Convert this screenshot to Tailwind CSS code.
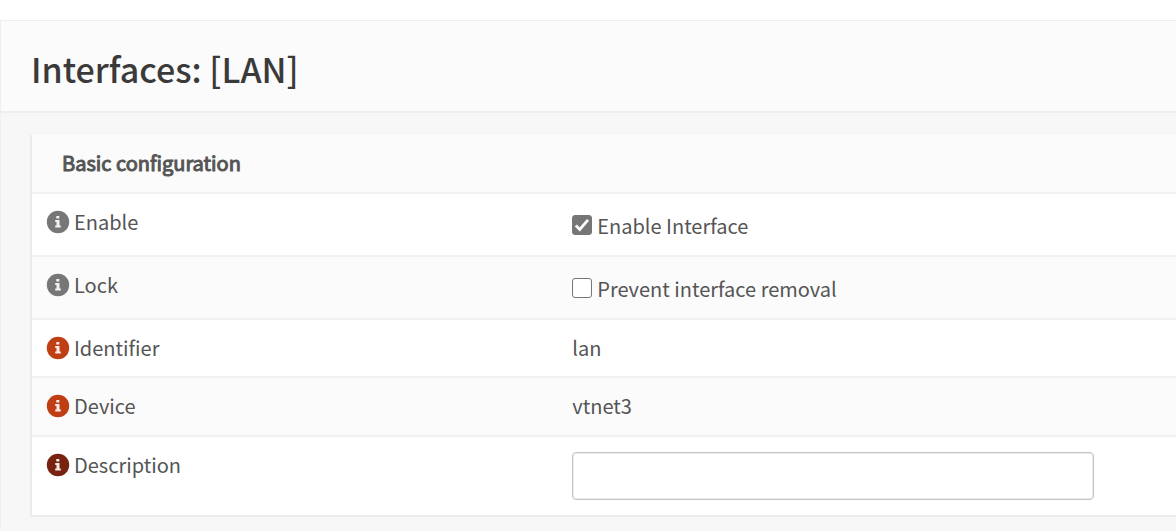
<!DOCTYPE html>
<html lang="en">
<head>
<meta charset="utf-8">
<meta name="viewport" content="width=device-width, initial-scale=1">
<title>Interfaces: [LAN]</title>
<script src="https://cdn.jsdelivr.net/npm/@tailwindcss/browser@4"></script>
</head>
<body class="min-h-screen bg-[#f7f7f7] font-['Noto_Sans_CJK_SC',sans-serif] text-[20px] leading-7 text-[#555]">
<svg class="hidden" aria-hidden="true">
  <symbol id="info" viewBox="0 0 24 24">
    <circle cx="12" cy="12" r="11.2" fill="currentColor"/>
    <path fill="#fff" fill-opacity=".9" d="M10.3 6h3v2.4h-3zM9.2 9.9h4.3v5.5h1.3v2H9.2v-2h1.3v-3.5H9.2z"/>
  </symbol>
  <symbol id="check" viewBox="0 0 20 20">
    <path d="M3.8 10.6l4 3.9L16 4.8" fill="none" stroke="#fff" stroke-width="2.8"/>
  </symbol>
</svg>
<div class="h-5 bg-white"></div>
<header class="border-t border-b-2 border-l border-[#eee] bg-[#fbfbfb] pt-[25px] pb-[19px] pl-[30px]">
  <h1 class="text-[34px] leading-[46px] font-medium text-[#3a3a3a]">Interfaces: [LAN]</h1>
</header>
<main class="border-l border-[#f0f0f0] pt-[22px] pb-3 pl-[29px]">
  <table class="w-full table-fixed border-separate border-spacing-0 border-b-2 border-l-2 border-[#ebebeb] bg-white text-left">
    <colgroup><col class="w-[46%]"><col></colgroup>
    <thead>
      <tr class="bg-[#fbfbfb]">
        <th colspan="2" scope="colgroup" class="border-b-2 border-[#f1f1f1] pt-[14px] pb-[15px] pl-[30px] font-normal [-webkit-text-stroke:1px_#555]">Basic configuration</th>
      </tr>
    </thead>
    <tbody class="align-top">
      <tr>
        <th scope="row" class="border-b-2 border-[#f1f1f1] pt-[14px] pl-[14px] font-normal"><a href="#enable" class="flex items-center gap-1"><svg class="size-6 text-[#777]" aria-hidden="true"><use href="#info"/></svg>Enable</a></th>
        <td class="border-b-2 border-[#f1f1f1] pt-[18px] pb-[15px] pl-[14px]"><label class="flex items-start gap-[5px]"><span class="mt-[3px] grid"><input id="enable" type="checkbox" checked class="peer col-start-1 row-start-1 size-5 appearance-none rounded-[3px] border border-[#767676] bg-white checked:bg-[#767676]"><svg class="pointer-events-none invisible col-start-1 row-start-1 size-5 peer-checked:visible" aria-hidden="true"><use href="#check"/></svg></span>Enable Interface</label></td>
      </tr>
      <tr class="bg-[#fbfbfb]">
        <th scope="row" class="border-b-2 border-[#f1f1f1] pt-[14px] pl-[14px] font-normal"><a href="#lock" class="flex items-center gap-1"><svg class="size-6 text-[#777]" aria-hidden="true"><use href="#info"/></svg>Lock</a></th>
        <td class="border-b-2 border-[#f1f1f1] pt-[18px] pb-[15px] pl-[14px]"><label class="flex items-start gap-[5px]"><span class="mt-[3px] grid"><input id="lock" type="checkbox" class="peer col-start-1 row-start-1 size-5 appearance-none rounded-[3px] border border-[#767676] bg-white checked:bg-[#767676]"><svg class="pointer-events-none invisible col-start-1 row-start-1 size-5 peer-checked:visible" aria-hidden="true"><use href="#check"/></svg></span>Prevent interface removal</label></td>
      </tr>
      <tr>
        <th scope="row" class="border-b-2 border-[#f1f1f1] pt-[14px] pb-[14px] pl-[14px] font-normal"><a href="#identifier" class="flex items-center gap-1"><svg class="size-6 text-[#c03e14]" aria-hidden="true"><use href="#info"/></svg>Identifier</a></th>
        <td id="identifier" class="border-b-2 border-[#f1f1f1] pt-[14px] pl-[14px]">lan</td>
      </tr>
      <tr class="bg-[#fbfbfb]">
        <th scope="row" class="border-b-2 border-[#f1f1f1] pt-[14px] pb-[15px] pl-[14px] font-normal"><a href="#device" class="flex items-center gap-1"><svg class="size-6 text-[#c03e14]" aria-hidden="true"><use href="#info"/></svg>Device</a></th>
        <td id="device" class="border-b-2 border-[#f1f1f1] pt-[14px] pl-[14px]">vtnet3</td>
      </tr>
      <tr>
        <th scope="row" class="pt-[14px] pl-[14px] font-normal"><label for="description" class="flex items-center gap-1"><svg class="size-6 text-[#78230f]" aria-hidden="true"><use href="#info"/></svg>Description</label></th>
        <td class="pt-[15px] pb-[15px] pl-[14px]"><input id="description" type="text" class="block h-12 w-full max-w-[522px] rounded border border-[#c4c4c4] bg-white px-4 shadow-[inset_0_0_0_1px_#ececec]"></td>
      </tr>
    </tbody>
  </table>
</main>
</body>
</html>
